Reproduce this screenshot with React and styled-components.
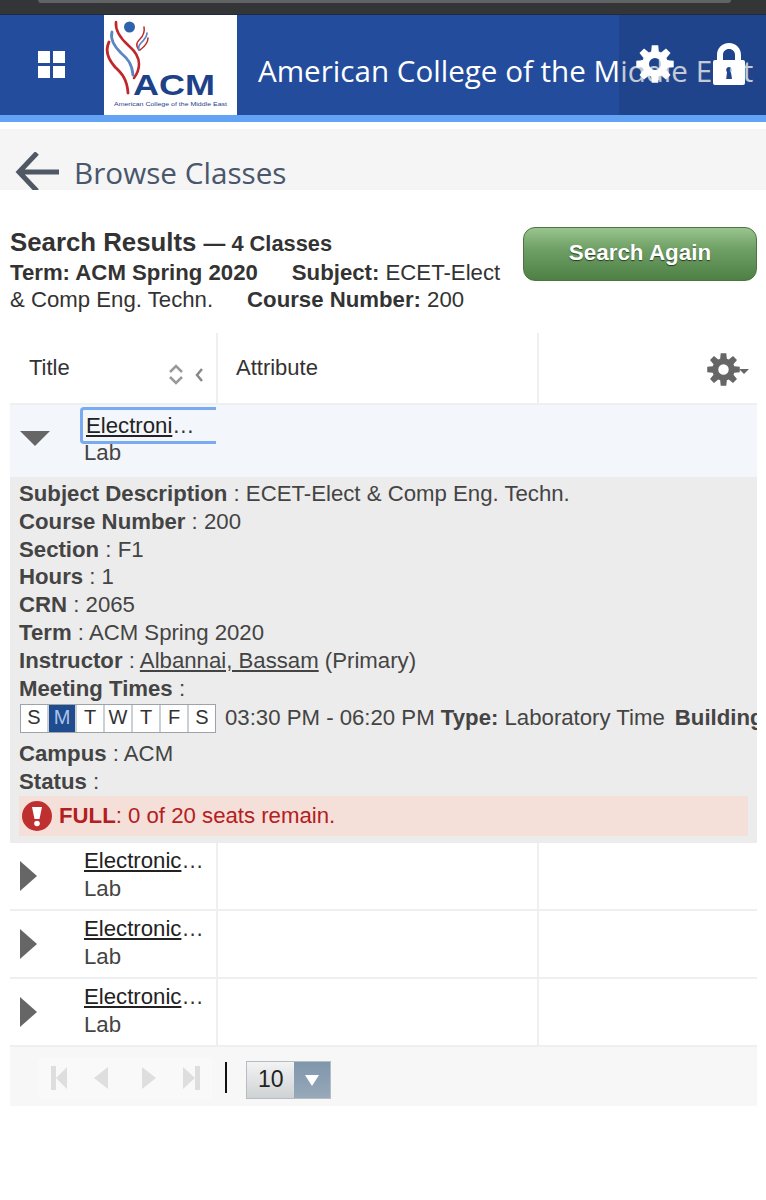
import styled, { createGlobalStyle } from 'styled-components'

const GlobalStyle = createGlobalStyle`
  html, body { margin: 0; padding: 0; background: #fff; }
  body { font-family: "Liberation Sans", Arial, sans-serif; color: #333; }
`

// 8 blunt teeth round a small hole
const gearPath = () => {
  const pts = []
  for (let i = 0; i < 8; i++) {
    const a = (i * Math.PI) / 4
    const add = (r, off) => pts.push(`${(12 + r * Math.sin(a + off)).toFixed(2)} ${(12 - r * Math.cos(a + off)).toFixed(2)}`)
    add(8.2, -0.3)
    add(12, -0.17)
    add(12, 0.17)
    add(8.2, 0.3)
  }
  return `M${pts.join('L')}zM12 8.200a3.800 3.800 0 1 0 0 7.600 3.800 3.800 0 0 0 0-7.600z`
}

const Gear = ({ size, color }) => (
  <svg width={size} height={size} viewBox="0 0 24 24"><path fill={color} fillRule="evenodd" d={gearPath()} /></svg>
)

const Logo = () => (
  <svg width="133" height="100" viewBox="0 0 133 100">
    <circle cx="25.500" cy="12" r="5.500" fill="#2f62ad" />
    <g fill="none" strokeLinecap="round">
      <path d="M12 7c-1 9 5 17 13 24 7 6 10 11 10 18 0 5-2 10-5 14" stroke="#c0272d" strokeWidth="2.600" />
      <path d="M8 17c-2 7 2 14 9 21 7 6 11 11 12 22" stroke="#5b86c2" strokeWidth="2.800" />
      <path d="M5 27C1 35 4 44 11 52c6 6 12 11 13 26" stroke="#c0272d" strokeWidth="2.800" />
      <path d="M40 12c1 5-1 9-4 12-3 3-5 6-1 11" stroke="#c0272d" strokeWidth="1.500" />
      <path d="M43 18c0 4-3 7-6 10-2 2-3 4-2 7" stroke="#5b86c2" strokeWidth="1.700" />
      <path d="M44 23c0 5-4 9-8 12" stroke="#c0272d" strokeWidth="1.500" />
    </g>
    <text x="29" y="80" fontFamily="Liberation Sans" fontWeight="700" fontSize="30" textLength="82" lengthAdjust="spacingAndGlyphs" fill="#1d4289">ACM</text>
    <text x="10" y="91" fontFamily="Liberation Sans" fontWeight="400" fontSize="6.200" textLength="113" lengthAdjust="spacingAndGlyphs" fill="#1d4289">American College of the Middle East</text>
  </svg>
)

const Page = styled.div`
  width: 766px;
  height: 1200px;
  overflow: hidden;
  background: #fff;
`
const Chrome = styled.div`
  height: 14px;
  background: #333536;
  border-bottom: 1px solid #1e2a44;
`
const ChromeBar = styled.div`
  height: 3px;
  margin: 0 35px 0 38px;
  background: #606264;
  border-radius: 0 0 10px 10px;
`
const Header = styled.header`
  position: relative;
  height: 100px;
  display: flex;
  align-items: center;
  background: #234d9c;
  overflow: hidden;
`
const MenuCell = styled.div`
  width: 104px;
  display: flex;
  justify-content: center;
  padding-right: 1px;
  box-sizing: border-box;
`
const MenuGrid = styled.div`
  display: grid;
  grid-template-columns: 12px 12px;
  gap: 3px;
  margin-bottom: 2px;
  i { background: #fff; height: 12px; }
`
const LogoBox = styled.div`
  width: 133px;
  height: 100px;
  background: #fff;
`
const CollegeName = styled.div`
  margin-left: 21px;
  font-family: "Open Sans", sans-serif;
  font-size: 29.600px;
  color: #fff;
  white-space: nowrap;
  margin-top: 11px;
`
const HeaderActions = styled.div`
  position: absolute;
  top: 0;
  right: 0;
  width: 147px;
  height: 100px;
  display: flex;
  align-items: flex-start;
  gap: 39px;
  padding: 28px 0 0 17px;
  box-sizing: border-box;
  background: rgba(20, 45, 90, 0.25);
  svg:first-child { margin-top: 2px; }
`
const Stripe = styled.div`
  height: 7px;
  background: #62a3f5;
`
const BrowseBar = styled.div`
  height: 61px;
  margin-top: 7px;
  background: #f5f5f5;
  display: flex;
  align-items: flex-start;
  overflow: hidden;
  padding: 23px 0 0 15px;
  box-sizing: border-box;
`
const BrowseTitle = styled.h1`
  margin: 3px 0 0 14px;
  font-family: "Open Sans", sans-serif;
  font-weight: 400;
  font-size: 29.700px;
  line-height: 35px;
  color: #49566b;
`
const Summary = styled.section`
  display: flex;
  justify-content: space-between;
  height: 143px;
  padding: 37px 9px 0 10px;
  box-sizing: border-box;
`
const SummaryText = styled.div`
  width: 500px;
  color: #333;
`
const Heading = styled.div`
  font-size: 25.800px;
  font-weight: 700;
  line-height: 30px;
  span { font-size: 21.800px; }
`
const SummaryLine = styled.div`
  font-size: 22.200px;
  line-height: 27px;
  white-space: nowrap;
  b { font-weight: 700; }
`
const SearchAgain = styled.button`
  width: 234px;
  height: 54px;
  border: 1px solid #4c7340;
  border-radius: 12px;
  background: linear-gradient(#9ac48f 0, #6fa065 40%, #4e7f44 100%);
  color: #fff;
  font: 700 22.400px "Liberation Sans", sans-serif;
  text-shadow: 0 1px 1px rgba(0, 0, 0, 0.6);
  padding: 0 0 3px;
`
const Table = styled.div`
  margin: 0 9px 0 10px;
`
const Row = styled.div`
  display: grid;
  grid-template-columns: 206px 2px 319px 2px 218px;
  height: ${p => p.$height}px;
  background: ${p => p.$bg || '#fff'};
  border-bottom: ${p => (p.$noLine ? 0 : 2)}px solid #eeeff0;
  box-sizing: border-box;
`
const Divider = styled.div`
  background: ${p => (p.$hidden ? 'transparent' : '#eeeff0')};
`
const HeadCell = styled.div`
  position: relative;
  font-size: 22px;
  padding: 22px 0 0 ${p => p.$pad || 0}px;
  color: #333;
`
const SortIcons = styled.svg`
  position: absolute;
  left: 159px;
  top: 31px;
`
const SettingsIcon = styled.div`
  position: absolute;
  right: 8px;
  top: 20px;
  display: flex;
  align-items: center;
`
const Caret = styled.i`
  width: 0;
  height: 0;
  border: 5px solid transparent;
  border-top: 5px solid #666;
  border-bottom: 0;
  margin: 4px 0 0 -1px;
`
const TitleCell = styled.div`
  display: grid;
  grid-template-columns: 74px 1fr;
  min-width: 0;
`
const Toggle = styled.div`
  display: flex;
  align-items: center;
  padding-left: 10px;
  padding-bottom: ${p => (p.$open ? 5 : 0)}px;
`
const ArrowDown = styled.i`
  width: 0;
  height: 0;
  border-style: solid;
  border-width: 15px 15px 0;
  border-color: #666 transparent transparent;
`
const ArrowRight = styled.i`
  width: 0;
  height: 0;
  border-style: solid;
  border-width: 15px 0 15px 17px;
  border-color: transparent transparent transparent #666;
`
const ClassText = styled.div`
  font-size: 22.200px;
  line-height: 28px;
  padding-top: ${p => (p.$open ? 6 : 4)}px;
  color: #444;
  min-width: 0;
`
const ClassName = styled.div`
  display: flex;
  color: #333;
  white-space: nowrap;
  u { text-decoration: underline; color: #222; }
`
const FocusName = styled(ClassName)`
  height: 31px;
  line-height: 32px;
  padding-left: 3px;
  border: 3px solid #7aaaf0;
  border-right: 0;
  border-radius: 4px 0 0 4px;
  margin: -4px 0 -5px -4px;
`
const Details = styled.div`
  height: 366px;
  background: #ececec;
  padding: 3px 0 0 9px;
  box-sizing: border-box;
  font-size: 22.200px;
  line-height: 27.800px;
  color: #444;
  overflow: hidden;
  b { font-weight: 700; }
`
const Meeting = styled.div`
  display: flex;
  align-items: center;
  white-space: nowrap;
  height: 30px;
  margin: 1px 0 7px 1px;
  overflow: hidden;
`
const Days = styled.div`
  display: flex;
  gap: 2px;
  flex: none;
  border: 1px solid #9da3a9;
  background: #c9d0d6;
  margin-right: 9px;
`
const Day = styled.div`
  width: 26px;
  height: 27px;
  display: flex;
  align-items: center;
  justify-content: center;
  font-size: 20px;
  background: ${p => (p.$on ? '#1f4c8f' : '#fff')};
  color: ${p => (p.$on ? '#a9c4e8' : '#333')};
`
const Spaced = styled.span`
  margin-left: ${p => p.$gap}px;
`
const Alert = styled.div`
  display: flex;
  align-items: center;
  gap: 7px;
  height: 40px;
  margin: 0;
  padding-left: 3px;
  width: 729px;
  background: #f5dfd9;
  color: #b3201f;
  box-sizing: border-box;
`
const Pager = styled.div`
  display: flex;
  align-items: center;
  height: 59px;
  background: #f7f7f7;
`
const PagerButtons = styled.div`
  display: flex;
  align-items: center;
  gap: 26px;
  width: 174px;
  height: 42px;
  margin: 2px 0 0 28px;
  padding-left: 12px;
  box-sizing: border-box;
  background: #f9f9f9;
  border-radius: 4px;
`
const Cursor = styled.div`
  width: 2px;
  height: 31px;
  background: #111;
  margin: 2px 19px 0 13px;
`
const PageSize = styled.div`
  display: flex;
  width: 85px;
  height: 38px;
  border: 1px solid #b5bcc2;
  box-sizing: border-box;
  margin-top: 7px;
`
const PageValue = styled.div`
  flex: 1;
  font-size: 23px;
  line-height: 35px;
  padding-left: 11px;
  color: #222;
  background: linear-gradient(#f2f3f3, #cfd2d4);
`
const PageArrow = styled.div`
  width: 36px;
  display: flex;
  align-items: center;
  justify-content: center;
  background: linear-gradient(#7f96ab, #97a9ba);
  i {
    width: 0;
    height: 0;
    border-style: solid;
    border-width: 11px 7px 0;
    border-color: #fff transparent transparent;
  }
`

const PagerIcon = ({ d }) => (
  <svg width="18" height="24" viewBox="0 0 18 24"><path fill="#dedede" d={d} /></svg>
)

const ClassRow = ({ name }) => (
  <Row $height={68}>
    <TitleCell>
      <Toggle><ArrowRight /></Toggle>
      <ClassText><ClassName><u>{name}</u>…</ClassName>Lab</ClassText>
    </TitleCell>
    <Divider /><div /><Divider /><div />
  </Row>
)

export default function App() {
  return (
    <Page>
      <GlobalStyle />
      <Chrome><ChromeBar /></Chrome>
      <Header>
        <MenuCell><MenuGrid><i /><i /><i /><i /></MenuGrid></MenuCell>
        <LogoBox><Logo /></LogoBox>
        <CollegeName>American College of the Middle East</CollegeName>
        <HeaderActions>
          <Gear size={38} color="#fff" />
          <svg width="32" height="42" viewBox="0 0 32 42">
            <path fill="#fff" fillRule="evenodd" d="M4 17V12C4 5 9 0 16 0s12 5 12 12v5h2a2 2 0 0 1 2 2v21a2 2 0 0 1-2 2H2a2 2 0 0 1-2-2V19a2 2 0 0 1 2-2zm6 0h12v-5c0-3.500-2.500-6-6-6s-6 2.500-6 6zm6 7a3 3 0 0 0-2 5.200L13 36h6l-1-6.800A3 3 0 0 0 16 24z" />
          </svg>
        </HeaderActions>
      </Header>
      <Stripe />
      <BrowseBar>
        <svg width="45" height="50" viewBox="0 0 45 50">
          <path d="M44 20H5M22 1 4 20l18 19" fill="none" stroke="#4f5864" strokeWidth="5" />
        </svg>
        <BrowseTitle>Browse Classes</BrowseTitle>
      </BrowseBar>
      <Summary>
        <SummaryText>
          <Heading>Search Results <span>— 4 Classes</span></Heading>
          <SummaryLine><b>Term: ACM Spring 2020</b><Spaced $gap={34}><b>Subject:</b> ECET-Elect</Spaced></SummaryLine>
          <SummaryLine>&amp; Comp Eng. Techn.<Spaced $gap={34}><b>Course Number:</b> 200</Spaced></SummaryLine>
        </SummaryText>
        <SearchAgain>Search Again</SearchAgain>
      </Summary>
      <Table>
        <Row $height={72}>
          <HeadCell $pad={19}>
            Title
            <SortIcons width="36" height="22" viewBox="0 0 36 22">
              <path d="M1 8l6-6 6 6M1 13l6 6 6-6" fill="none" stroke="#999" strokeWidth="2.500" />
              <path d="M33 5l-5 6 5 6" fill="none" stroke="#888" strokeWidth="2.500" />
            </SortIcons>
          </HeadCell>
          <Divider />
          <HeadCell $pad={18}>Attribute</HeadCell>
          <Divider />
          <HeadCell>
            <SettingsIcon><Gear size={33} color="#666" /><Caret /></SettingsIcon>
          </HeadCell>
        </Row>
        <Row $height={72} $bg="#f3f6fb" $noLine>
          <TitleCell>
            <Toggle $open><ArrowDown /></Toggle>
            <ClassText $open><FocusName><u>Electroni</u>…</FocusName>Lab</ClassText>
          </TitleCell>
          <Divider $hidden /><div /><Divider $hidden /><div />
        </Row>
        <Details>
          <div><b>Subject Description</b> : ECET-Elect &amp; Comp Eng. Techn.</div>
          <div><b>Course Number</b> : 200</div>
          <div><b>Section</b> : F1</div>
          <div><b>Hours</b> : 1</div>
          <div><b>CRN</b> : 2065</div>
          <div><b>Term</b> : ACM Spring 2020</div>
          <div><b>Instructor</b> : <u>Albannai, Bassam</u> (Primary)</div>
          <div><b>Meeting Times</b> :</div>
          <Meeting>
            <Days>
              {['S', 'M', 'T', 'W', 'T', 'F', 'S'].map((d, i) => <Day key={i} $on={i === 1}>{d}</Day>)}
            </Days>
            03:30 PM - 06:20 PM&nbsp;<b>Type:</b>&nbsp;Laboratory Time<Spaced $gap={10}><b>Building:</b></Spaced>
          </Meeting>
          <div><b>Campus</b> : ACM</div>
          <div><b>Status</b> :</div>
          <Alert>
            <svg width="30" height="30" viewBox="0 0 30 30">
              <circle cx="15" cy="15" r="15" fill="#bf2f2f" />
              <path d="M10 6h10l-2.500 12h-5z" fill="#fff" />
              <circle cx="15" cy="22.500" r="2.800" fill="#fff" />
            </svg>
            <span><b>FULL</b>: 0 of 20 seats remain.</span>
          </Alert>
        </Details>
        <ClassRow name="Electronic" />
        <ClassRow name="Electronic" />
        <ClassRow name="Electronic" />
        <Pager>
          <PagerButtons>
            <PagerIcon d="M1 0h5v24H1zM17 1v22L6 12z" />
            <PagerIcon d="M14 1v22L0 12z" />
            <PagerIcon d="M4 1v22l14-11z" />
            <PagerIcon d="M13 0h5v24h-5zM1 1v22l12-11z" />
          </PagerButtons>
          <Cursor />
          <PageSize>
            <PageValue>10</PageValue>
            <PageArrow><i /></PageArrow>
          </PageSize>
        </Pager>
      </Table>
    </Page>
  )
}
